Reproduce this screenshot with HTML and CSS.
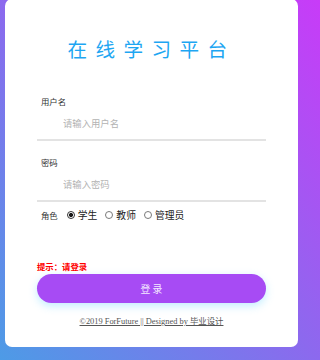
FILE: index.html
```html
<!DOCTYPE html>
<html lang="zh-CN">
<head>
<meta charset="utf-8">
<title>在线学习平台</title>
<link rel="stylesheet" href="styles.css">
</head>
<body>
<div class="card">
  <h1 class="title">在线学习平台</h1>
  <form class="form">
    <div class="field">
      <label class="label" for="user">用户名</label>
      <input class="input" id="user" type="text" placeholder="请输入用户名">
    </div>
    <div class="field field-pass">
      <label class="label" for="pass">密码</label>
      <input class="input" id="pass" type="password" placeholder="请输入密码">
    </div>
    <div class="roles">
      <span class="label role-label">角色</span>
      <input class="radio" type="radio" name="role" id="r1" checked>
      <label class="radio-text" for="r1">学生</label>
      <input class="radio" type="radio" name="role" id="r2">
      <label class="radio-text" for="r2">教师</label>
      <input class="radio" type="radio" name="role" id="r3">
      <label class="radio-text" for="r3">管理员</label>
    </div>
    <div class="hint">提示：请登录</div>
    <button class="btn" type="button">登 录</button>
  </form>
  <div class="footer"><a class="footer-link" href="#">©2019 ForFuture || Designed by 毕业设计</a></div>
</div>
</body>
</html>
```

FILE: styles.css
```css
html, body {
  margin: 0;
  padding: 0;
}
body {
  height: 360px;
  overflow: hidden;
  background: linear-gradient(to top right, #4d9be6 0%, #8c69ee 50%, #c83bf8 100%);
  font-family: "Noto Sans CJK SC", "Noto Sans", sans-serif;
}
.card {
  box-sizing: border-box;
  width: 293px;
  height: 348px;
  margin: -1px 0 0 5px;
  padding: 0 32px;
  background: #fff;
  border-radius: 7px;
}
.title {
  margin: 0;
  padding-top: 40px;
  height: 20px;
  line-height: 20px;
  font-size: 19.6px;
  font-weight: 400;
  letter-spacing: 8.4px;
  text-align: center;
  color: #1ea6f2;
}
.form {
  margin: 0;
}
.field {
  display: flex;
  flex-direction: column;
  margin-top: 37px;
}
.field-pass {
  margin-top: 16px;
}
.label {
  display: block;
  padding-left: 4px;
  height: 10px;
  line-height: 10px;
  font-size: 8.4px;
  color: #333;
}
.input {
  box-sizing: border-box;
  width: 100%;
  height: 35px;
  margin: 0;
  padding: 0 0 0 26px;
  border: none;
  border-bottom: 2px solid #e3e3e3;
  outline: none;
  background: transparent;
  font-family: "Noto Sans CJK SC", "Noto Sans", sans-serif;
  font-size: 9.33px;
  line-height: 33px;
  color: #333;
}
.input::placeholder {
  color: #b3b3b3;
}
.roles {
  display: flex;
  align-items: center;
  margin-top: 7px;
  height: 12px;
}
.role-label {
  padding-left: 4px;
}
.radio {
  appearance: none;
  -webkit-appearance: none;
  box-sizing: border-box;
  width: 8px;
  height: 8px;
  margin: 0 0 0 8px;
  border: 1px solid #7a7a7a;
  border-radius: 50%;
  background: #fff;
}
.role-label + .radio {
  margin-left: 9px;
}
.radio:checked {
  border-color: #333;
  background: radial-gradient(circle, #1a1a1a 0 1.8px, #fff 2.3px);
}
.radio-text {
  margin-left: 3px;
  font-size: 9.8px;
  line-height: 12px;
  color: #222;
}
.hint {
  margin-top: 42px;
  height: 10px;
  line-height: 10px;
  font-size: 8.4px;
  font-weight: 700;
  color: #ff0000;
  font-family: "Liberation Serif", "Noto Sans CJK SC", serif;
}
.btn {
  display: block;
  width: 100%;
  height: 29px;
  margin-top: 1px;
  border: none;
  border-radius: 15px;
  background: #a74bf4;
  color: #f4eaff;
  font-family: "Noto Sans CJK SC", "Noto Sans", sans-serif;
  font-size: 9.8px;
  box-shadow: 0 3px 9px rgba(120, 215, 255, 0.45);
  cursor: pointer;
}
.footer {
  margin-top: 14px;
  height: 10px;
  line-height: 10px;
  text-align: center;
  font-family: "Liberation Serif", "Noto Sans CJK SC", serif;
  font-size: 8.4px;
}
.footer-link {
  color: #555;
  text-decoration: underline;
}
```
